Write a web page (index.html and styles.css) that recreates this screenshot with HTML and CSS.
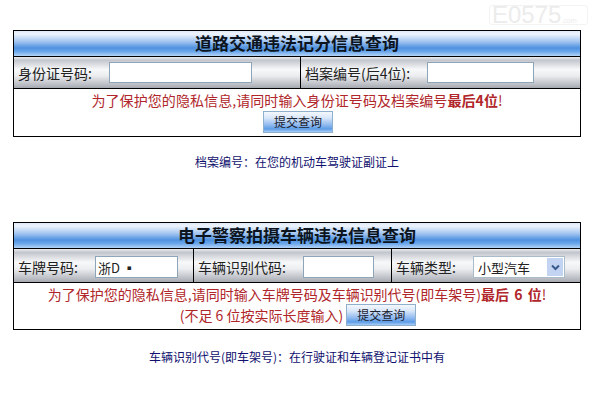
FILE: index.html
```html
<!DOCTYPE html>
<html lang="zh-CN">
<head>
<meta charset="utf-8">
<title>违法信息查询</title>
<link rel="stylesheet" href="styles.css">
</head>
<body>
<div class="watermark">E0575<small>.com</small></div>
<main class="page">
  <section class="panel">
    <h2 class="title">道路交通违法记分信息查询</h2>
    <div class="fields">
      <div class="cell cell-id"><label class="label label-id">身份证号码:</label><input class="input input-id" type="text"></div>
      <div class="cell cell-file"><label class="label label-file">档案编号(后4位):</label><input class="input input-file" type="text"></div>
    </div>
    <div class="notice notice-one">
      <p class="line">为了保护您的隐私信息,请同时输入身份证号码及档案编号<b>最后4位</b>!</p>
      <p class="line line-btn"><button class="submit" type="button">提交查询</button></p>
    </div>
  </section>
  <p class="hint hint-one">档案编号：在您的机动车驾驶证副证上</p>

  <section class="panel panel-two">
    <h2 class="title">电子警察拍摄车辆违法信息查询</h2>
    <div class="fields fields-two">
      <div class="cell cell-plate"><label class="label label-plate">车牌号码:</label><input class="input input-plate" type="text" value="浙D ▪"></div>
      <div class="cell cell-vin"><label class="label label-vin">车辆识别代码:</label><input class="input input-vin" type="text"></div>
      <div class="cell cell-type"><label class="label label-type">车辆类型:</label>
        <div class="select"><span class="select-text">小型汽车</span><span class="select-btn"><svg width="9" height="7" viewBox="0 0 9 7"><path d="M1 1.5 L4.5 5 L8 1.5" fill="none" stroke="#3a5a8c" stroke-width="2"/></svg></span></div>
      </div>
    </div>
    <div class="notice notice-two">
      <p class="line">为了保护您的隐私信息,请同时输入车牌号码及车辆识别代号(即车架号)<b>最后 6 位</b>!</p>
      <p class="line line-btn">(不足 6 位按实际长度输入) <button class="submit" type="button">提交查询</button></p>
    </div>
  </section>
  <p class="hint hint-two">车辆识别代号(即车架号)：在行驶证和车辆登记证书中有</p>
</main>
</body>
</html>
```
FILE: styles.css
```css
* { box-sizing: border-box; }
html, body { margin: 0; padding: 0; background: #fff; }
body {
  width: 593px;
  height: 412px;
  overflow: hidden;
  font-family: "Noto Sans CJK SC", "Liberation Sans", sans-serif;
  position: relative;
}
.page { padding: 30px 12px 0 13px; }
.watermark {
  position: absolute;
  left: 489px;
  top: 5px;
  width: 99px;
  height: 20px;
  border: 1px solid #f3f3f3;
  border-radius: 3px;
  color: #ececec;
  font: 24px/18px "Liberation Sans", sans-serif;
  padding-left: 2px;
  white-space: nowrap;
}
.watermark small { font-size: 7px; }
.panel { width: 568px; border: 1px solid #000; display: flex; flex-direction: column; height: 107px; }
.panel-two { height: 108px; }
.title {
  margin: 0;
  height: 26px;
  border-bottom: 1px solid #000;
  background: linear-gradient(#dfeafa 0%, #eef4fd 12%, #a9c9f2 40%, #4f92e0 68%, #6aa6ea 82%, #b4d4f8 100%);
  color: #0c1420;
  font-size: 17px;
  line-height: 24px;
  font-weight: 700;
  text-align: center;
}
.fields {
  display: flex;
  height: 32px;
  border-bottom: 1px solid #000;
  background: linear-gradient(#eceef0 0%, #c2c5cc 10%, #f7f8f9 40%, #eceef0 60%, #b9bcc3 90%, #a5a8af 100%);
}
.fields-two { height: 34px; }
.fields-two .cell { padding-top: 3px; }
.cell { display: flex; align-items: center; border-right: 1px solid #000; padding-left: 4px; }
.cell:last-child { border-right: 0; }
.label { font-size: 14px; color: #222; white-space: nowrap; }
.input {
  height: 21px;
  border: 1px solid #8ea4b8;
  background: #fff;
  padding: 0 2px;
  font: 13px "Noto Sans CJK SC", "Liberation Sans", sans-serif;
  color: #222;
  border-radius: 0;
  outline: 0;
}
.fields-two .input { height: 22px; }
.cell-id { width: 287px; }
.label-id { width: 91px; }
.input-id { width: 143px; }
.cell-file { flex: 1; }
.label-file { width: 122px; }
.input-file { width: 107px; }
.cell-plate { width: 180px; }
.label-plate { width: 77px; }
.input-plate { width: 83px; }
.cell-vin { width: 198px; }
.label-vin { width: 105px; }
.input-vin { width: 71px; }
.cell-type { flex: 1; }
.label-type { width: 77px; }
.select {
  width: 92px;
  height: 22px;
  border: 1px solid #a9bccb;
  background: #fff;
  display: flex;
  align-items: center;
  justify-content: space-between;
  padding: 0 1px 0 4px;
}
.select-text { font-size: 13px; color: #222; }
.select-btn {
  width: 16px;
  height: 18px;
  background: #c3d4f2;
  display: flex;
  align-items: center;
  justify-content: center;
}
.notice { flex: 1; color: #b0262a; font-size: 14px; text-align: center; }
.notice b { font-weight: 700; word-spacing: 2px; }
.line { margin: 0; white-space: nowrap; }
.notice-one { padding-top: 1px; }
.notice-one .line { line-height: 21px; letter-spacing: 0.08px; }
.notice-one .line-btn { height: 22px; padding-left: 2px; display: flex; justify-content: center; }
.notice-two .line { line-height: 22px; }
.notice-two .line-btn { height: 22px; margin-top: -1px; padding-left: 2px; }
.submit {
  width: 70px;
  height: 22px;
  padding: 0;
  border: 1px solid #8fb0cc;
  background: linear-gradient(#f4f8fe 0%, #d8e6f9 30%, #8fb9ef 65%, #5d9ce6 85%, #a9cdf6 100%);
  color: #1a2230;
  font: 12px/20px "Noto Sans CJK SC", "Liberation Sans", sans-serif;
  vertical-align: top;
}
.hint { margin: 0; text-align: center; color: #10106e; font-size: 12px; line-height: 16px; width: 568px; }
.hint-one { padding-top: 17px; height: 85px; }
.hint-two { padding-top: 19px; }
```
